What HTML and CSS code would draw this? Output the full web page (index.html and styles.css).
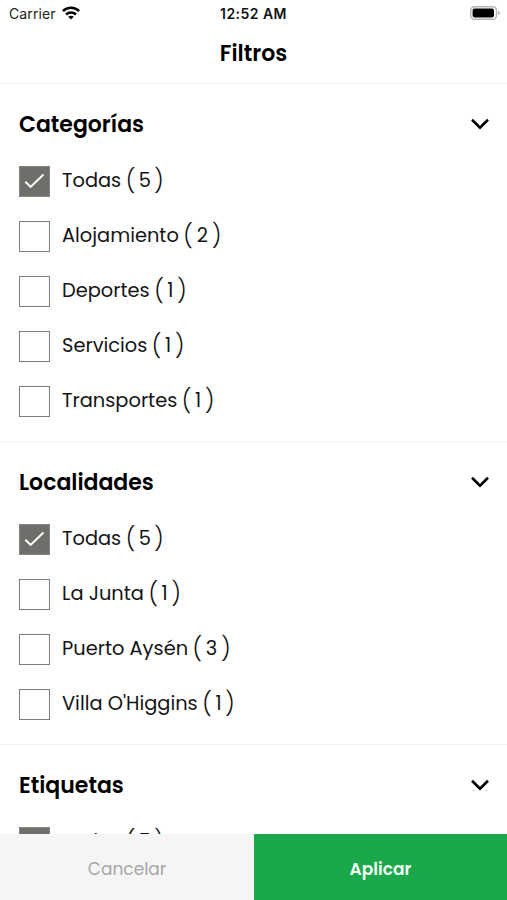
FILE: index.html
```html
<!DOCTYPE html>
<html lang="es">
<head>
<meta charset="utf-8">
<title>Filtros</title>
<link rel="stylesheet" href="styles.css">
</head>
<body>
<div class="screen">
  <div class="status">
    <div class="carrier">
      <span>Carrier</span>
      <svg class="wifi" viewBox="0 0 18 14" fill="none" stroke="#000" stroke-width="2.5">
        <path d="M.9 5.1C5.4.6 12.6.6 17.1 5.1"/>
        <path d="M4 8.5C6.8 5.8 11.2 5.8 14 8.5"/>
        <path d="M9 13.6 6.2 10.8C7.7 9.3 10.3 9.3 11.8 10.8Z" fill="#000" stroke="none"/>
      </svg>
    </div>
    <div class="time">12:52 AM</div>
    <svg class="battery" viewBox="0 0 32 16">
      <rect x="1.7" y="1.7" width="25.8" height="12.6" rx="3.8" fill="#fff" stroke="#b5b5b5" stroke-width="1.4"/>
      <rect x="3.6" y="3.5" width="21.4" height="9" rx="2" fill="#000"/>
      <path d="M29 5.8C31.4 6.6 31.4 9.4 29 10.2Z" fill="#b5b5b5"/>
    </svg>
  </div>
  <header class="title">Filtros</header>
  <main class="filters">
    <section class="group">
      <h2 class="heading"><span>Categorías</span><svg class="chevron" viewBox="0 0 20 12"><path d="M2 1.8 10 9.6 18 1.8"/></svg></h2>
      <div class="row"><span class="box checked"><svg class="tick" viewBox="0 0 30 30"><path d="M5.5 15.3 11 20.7 24.3 7.8"/></svg></span><span class="name">Todas</span><span class="count"><i>(</i><b>5</b><i>)</i></span></div>
      <div class="row"><span class="box"></span><span class="name">Alojamiento</span><span class="count"><i>(</i><b>2</b><i>)</i></span></div>
      <div class="row"><span class="box"></span><span class="name">Deportes</span><span class="count one"><i>(</i><b>1</b><i>)</i></span></div>
      <div class="row"><span class="box"></span><span class="name">Servicios</span><span class="count one"><i>(</i><b>1</b><i>)</i></span></div>
      <div class="row"><span class="box"></span><span class="name">Transportes</span><span class="count one"><i>(</i><b>1</b><i>)</i></span></div>
    </section>
    <section class="group">
      <h2 class="heading"><span>Localidades</span><svg class="chevron" viewBox="0 0 20 12"><path d="M2 1.8 10 9.6 18 1.8"/></svg></h2>
      <div class="row"><span class="box checked"><svg class="tick" viewBox="0 0 30 30"><path d="M5.5 15.3 11 20.7 24.3 7.8"/></svg></span><span class="name">Todas</span><span class="count"><i>(</i><b>5</b><i>)</i></span></div>
      <div class="row"><span class="box"></span><span class="name">La Junta</span><span class="count one"><i>(</i><b>1</b><i>)</i></span></div>
      <div class="row"><span class="box"></span><span class="name">Puerto Aysén</span><span class="count"><i>(</i><b>3</b><i>)</i></span></div>
      <div class="row"><span class="box"></span><span class="name">Villa O'Higgins</span><span class="count one"><i>(</i><b>1</b><i>)</i></span></div>
    </section>
    <section class="group">
      <h2 class="heading"><span>Etiquetas</span><svg class="chevron" viewBox="0 0 20 12"><path d="M2 1.8 10 9.6 18 1.8"/></svg></h2>
      <div class="row"><span class="box checked"><svg class="tick" viewBox="0 0 30 30"><path d="M5.5 15.3 11 20.7 24.3 7.8"/></svg></span><span class="name">Todas</span><span class="count"><i>(</i><b>5</b><i>)</i></span></div>
    </section>
  </main>
  <footer class="actions">
    <button class="cancel">Cancelar</button>
    <button class="apply">Aplicar</button>
  </footer>
</div>
</body>
</html>
```
FILE: styles.css
```css
* { box-sizing: border-box; }
body { margin: 0; background: #fff; color: #000; font-family: Poppins, Inter, "Liberation Sans", sans-serif; }
.screen { height: 900px; display: flex; flex-direction: column; overflow: hidden; }

.status { height: 27px; flex: none; display: grid; grid-template-columns: 1fr auto 1fr; align-items: center; padding: 0 6px 0 9px; font: 14px Inter, sans-serif; }
.carrier { display: flex; align-items: center; gap: 6px; color: #222; letter-spacing: .1px; }
.wifi { width: 18px; height: 14px; margin-top: -2px; }
.time { font-weight: 600; letter-spacing: .45px; color: #111; margin-right: 3px; }
.battery { width: 32px; height: 16px; justify-self: end; margin-top: -1px; }

.title { height: 57px; flex: none; display: flex; align-items: center; justify-content: center; padding-bottom: 3px; border-bottom: 1px solid #f0f0f0; font-size: 22px; font-weight: 600; }

.filters { flex: 1; min-height: 0; overflow: hidden; }
.group { padding-bottom: 12px; border-bottom: 1px solid #f0f0f0; }
.heading { height: 70px; margin: 0; padding: 11px 17px 0 19px; display: flex; align-items: center; justify-content: space-between; font-size: 22px; font-weight: 600; }
.group + .group .heading { padding-top: 10px; }
.chevron { width: 20px; height: 12px; margin-top: -1px; fill: none; stroke: #000; stroke-width: 2.6; }

.row { height: 55px; display: flex; align-items: center; padding-left: 19px; font-size: 19.4px; color: #141414; }
.box { width: 31px; height: 31px; flex: none; border: 1px solid #7d7d7d; margin-right: 12px; }
.checked { background: #6f6e6b; border-color: #858481; }
.tick { display: block; width: 29px; height: 29px; fill: none; stroke: #fff; stroke-width: 2; }
.name { white-space: nowrap; padding-bottom: 2px; }
.count { width: 38px; margin-left: 4.5px; padding-bottom: 2px; display: flex; align-items: center; justify-content: space-between; }
.one { width: 32.5px; }
.count b { font-weight: 400; }
.count i { font-style: normal; font-weight: 300; font-size: 23px; line-height: 24px; }

.actions { height: 66px; flex: none; display: grid; grid-template-columns: 254px 1fr; }
.actions button { border: 0; padding: 3px 0 0; font-family: inherit; font-size: 17px; }
.actions .cancel { background: #f5f5f5; color: #a6a6a6; }
.actions .apply { background: #1aa84b; color: #f2fff5; font-weight: 600; }
```
